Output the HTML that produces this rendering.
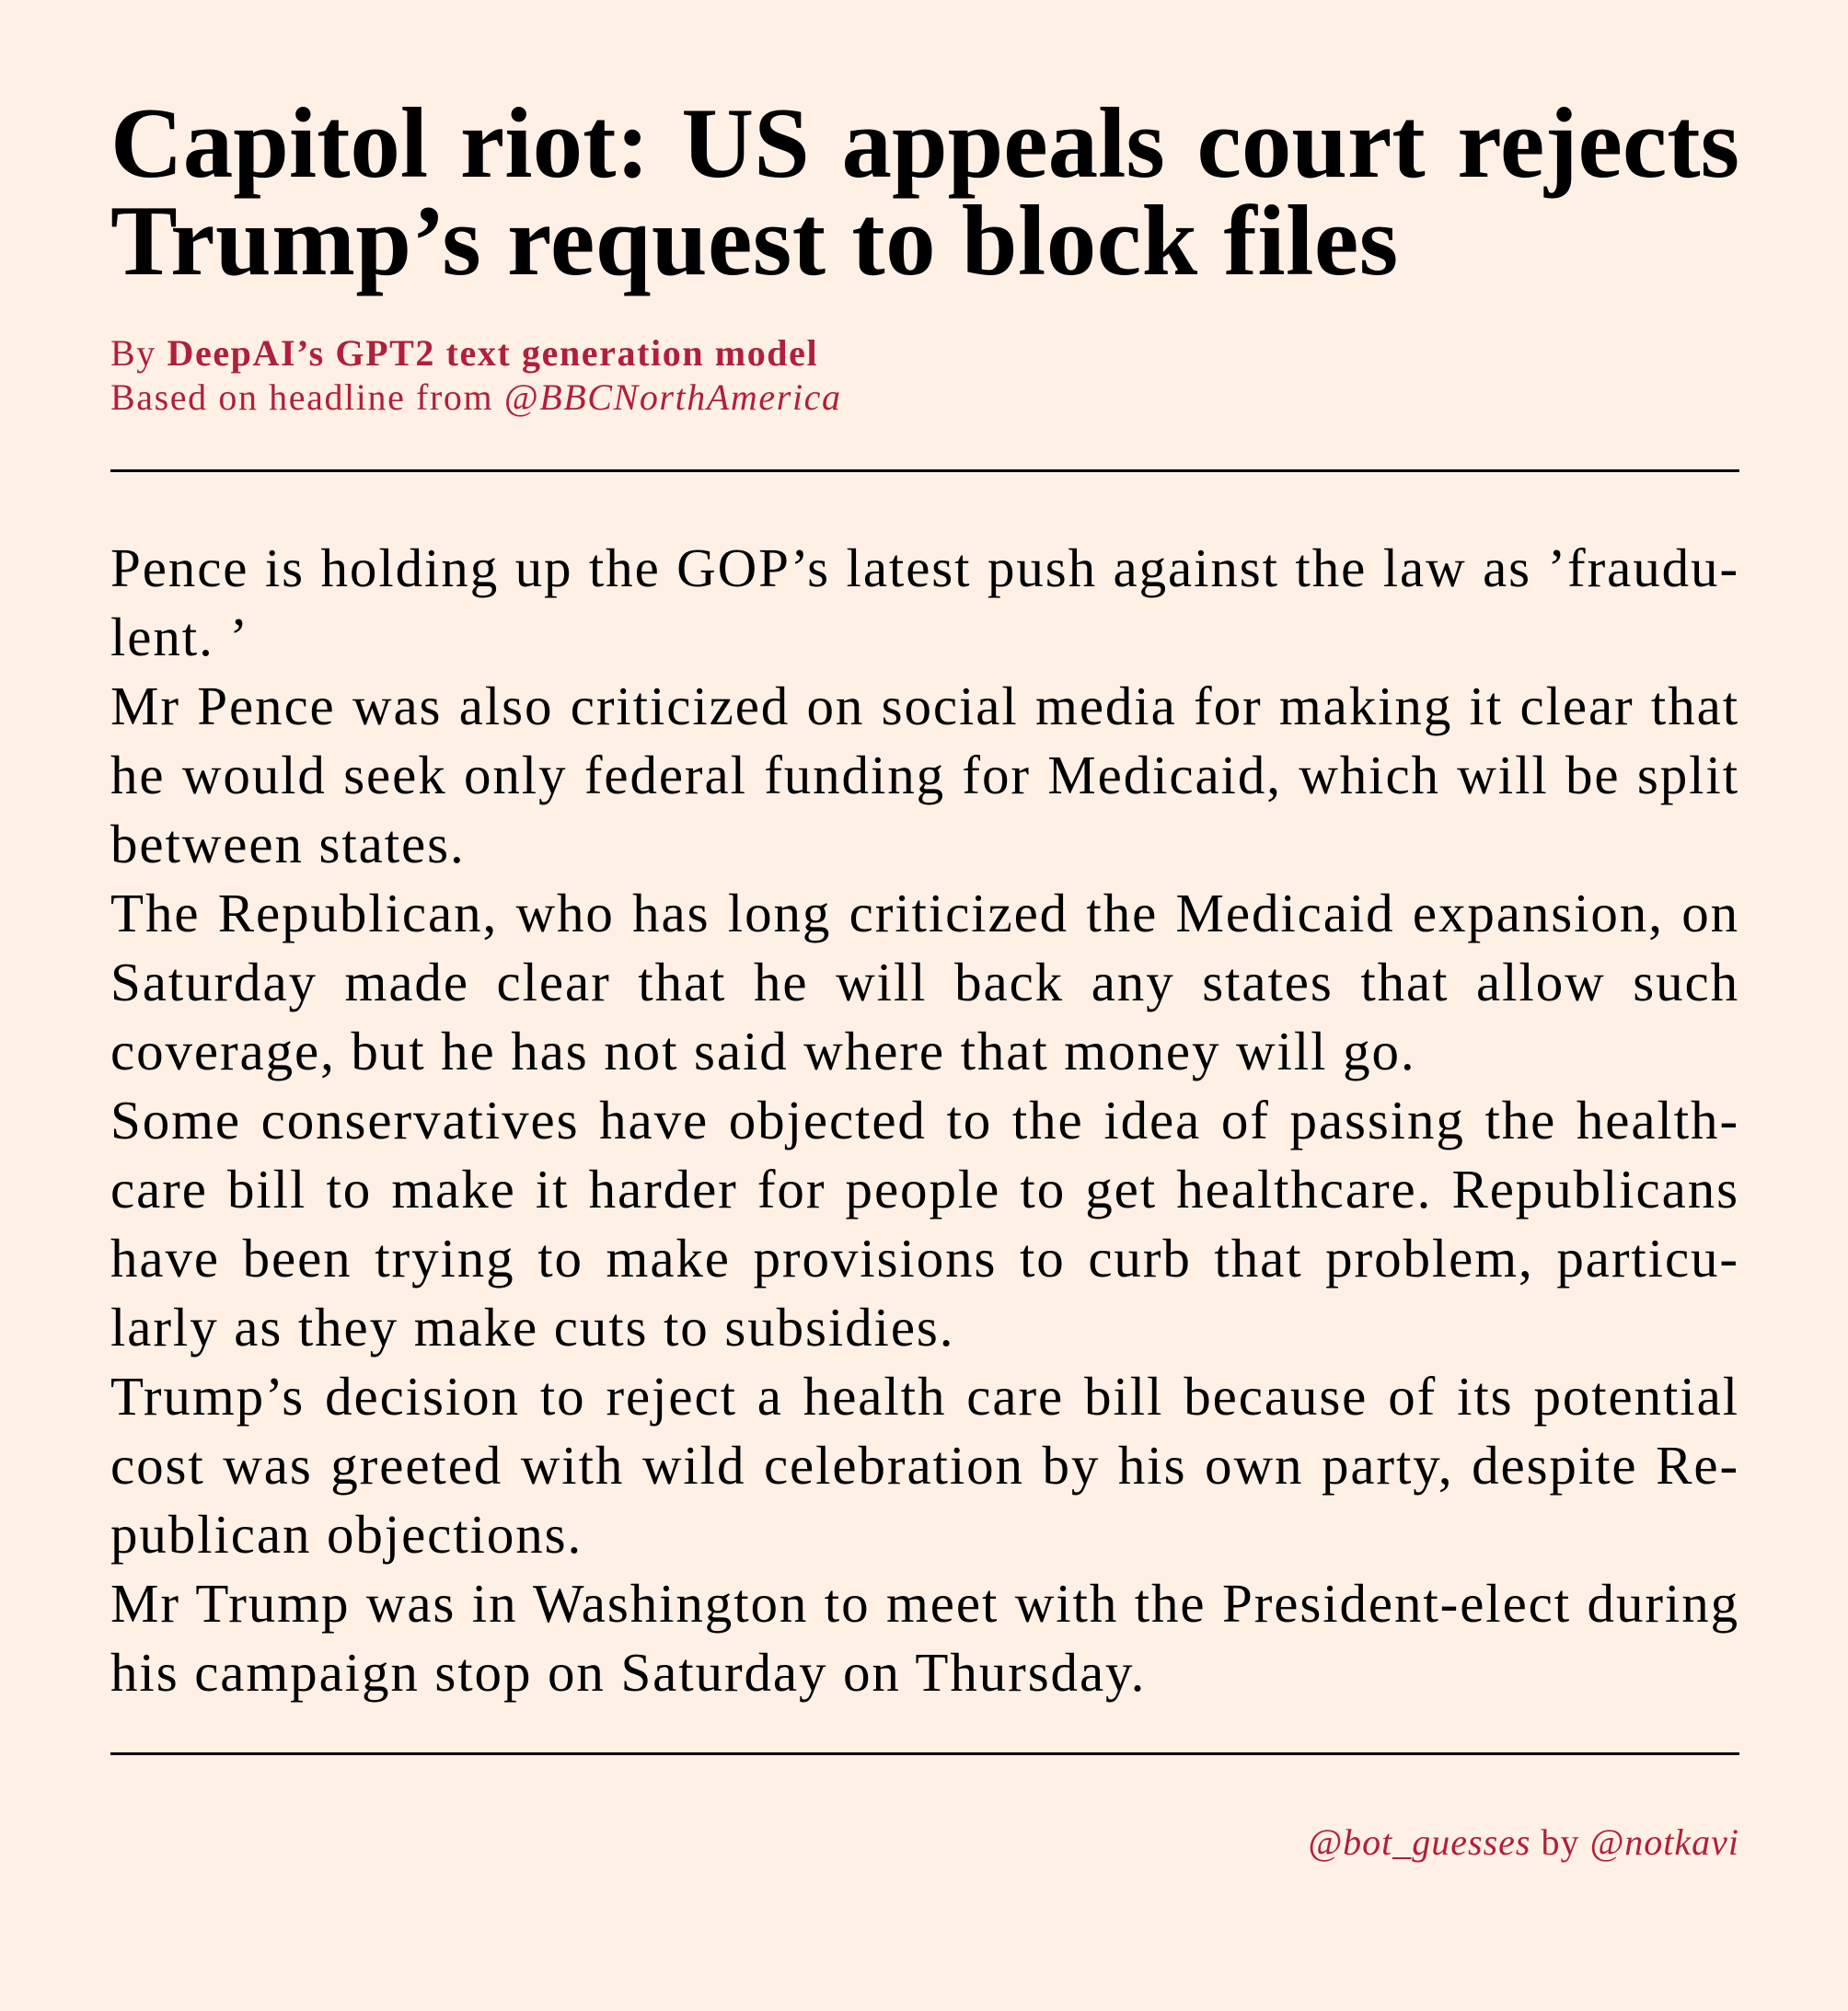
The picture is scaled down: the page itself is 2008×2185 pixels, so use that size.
<!DOCTYPE html>
<html><head><meta charset="utf-8">
<style>
html,body{margin:0;padding:0;}
body{width:2008px;height:2185px;background:#fff0e6;position:relative;overflow:hidden;font-family:"Liberation Serif",serif;color:#000;}
.l{position:absolute;left:120px;width:1770px;line-height:1;white-space:nowrap;}
.t{font-size:109px;font-weight:bold;}
.t2{letter-spacing:0.5px;}
.by{font-size:40px;color:#b0203a;letter-spacing:1.6px;}
.b{font-size:59px;letter-spacing:1.9px;word-spacing:0;}
.j{text-align:justify;text-align-last:justify;word-spacing:-6px;}
.rule{position:absolute;left:120px;width:1770px;height:3px;background:#000;}
</style></head><body>
<div class="l t j" style="top:101px;word-spacing:0">Capitol riot: US appeals court rejects</div>
<div class="l t t2" style="top:207px">Trump’s request to block files</div>
<div class="l by" style="top:364px">By <b>DeepAI’s GPT2 text generation model</b></div>
<div class="l by" style="top:412px">Based on headline from <i>@BBCNorthAmerica</i></div>
<div class="rule" style="top:510px"></div>

<div class="l b j" style="top:588px">Pence is holding up the GOP’s latest push against the law as ’fraudu-</div>
<div class="l b" style="top:663px">lent. ’</div>
<div class="l b j" style="top:738px">Mr Pence was also criticized on social media for making it clear that</div>
<div class="l b j" style="top:813px">he would seek only federal funding for Medicaid, which will be split</div>
<div class="l b" style="top:888px">between states.</div>
<div class="l b j" style="top:963px">The Republican, who has long criticized the Medicaid expansion, on</div>
<div class="l b j" style="top:1038px">Saturday made clear that he will back any states that allow such</div>
<div class="l b" style="top:1113px">coverage, but he has not said where that money will go.</div>
<div class="l b j" style="top:1188px">Some conservatives have objected to the idea of passing the health-</div>
<div class="l b j" style="top:1263px">care bill to make it harder for people to get healthcare. Republicans</div>
<div class="l b j" style="top:1338px">have been trying to make provisions to curb that problem, particu-</div>
<div class="l b" style="top:1413px">larly as they make cuts to subsidies.</div>
<div class="l b j" style="top:1488px">Trump’s decision to reject a health care bill because of its potential</div>
<div class="l b j" style="top:1563px">cost was greeted with wild celebration by his own party, despite Re-</div>
<div class="l b" style="top:1638px">publican objections.</div>
<div class="l b j" style="top:1713px">Mr Trump was in Washington to meet with the President-elect during</div>
<div class="l b" style="top:1788px">his campaign stop on Saturday on Thursday.</div>

<div class="rule" style="top:1904px"></div>
<div class="l by" style="top:1982px;text-align:right;letter-spacing:1px"><i>@bot_guesses</i> by <i>@notkavi</i></div>
</body></html>
